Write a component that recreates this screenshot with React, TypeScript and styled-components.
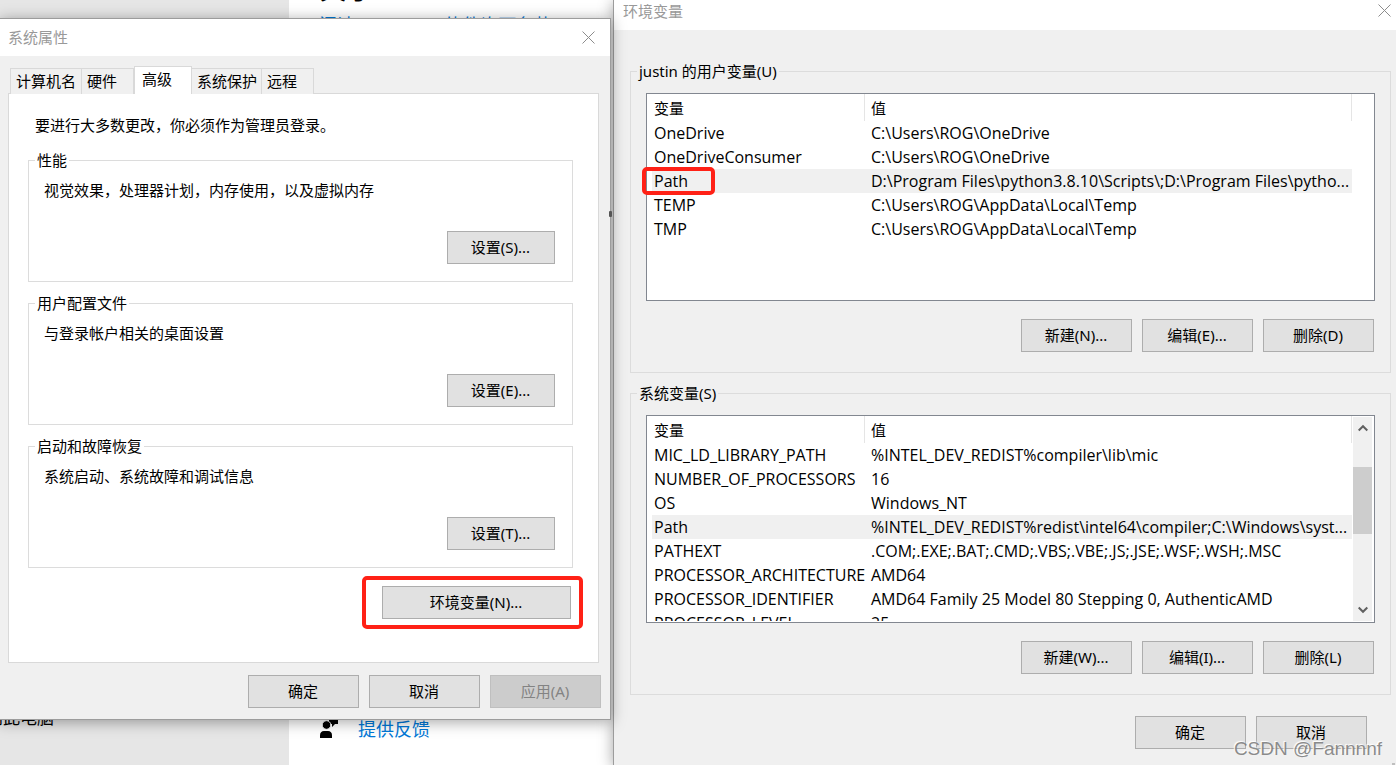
import React from 'react';
import styled, { createGlobalStyle } from 'styled-components';

const GlobalStyle = createGlobalStyle`
  * { box-sizing: border-box; }
  body {
    margin: 0;
    color: #000;
    font: 15px/20px "Noto Sans", "Noto Sans CJK SC", sans-serif;
  }
  button { font: inherit; color: inherit; }
`;

const Desktop = styled.div`
  position: relative;
  display: grid;
  grid-template-columns: 289px 1fr;
  min-height: 100vh;
  overflow: hidden;
`;

const SettingsNav = styled.nav`
  display: flex;
  flex-direction: column;
  justify-content: flex-end;
  padding-bottom: 35px;
  background: #e6e6e6;
`;

const NavItem = styled.a`
  margin-left: -14px;
  color: #000;
  font-size: 17px;
  line-height: 24px;
  text-decoration: none;
`;

const SettingsMain = styled.main`
  display: flex;
  flex-direction: column;
  justify-content: space-between;
  padding: 0 30px 23px;
  background: #fff;
`;

const SettingsHeading = styled.h1`
  margin: -32px 0 0;
  font-size: 28px;
  line-height: 40px;
`;

const SettingsLink = styled.a`
  display: block;
  margin-top: 4px;
  color: #0078d7;
  font-size: 18px;
  line-height: 26px;
  text-decoration: none;
`;

const Feedback = styled.div`
  display: flex;
  gap: 19px;
  align-items: center;
`;

const FeedbackLink = styled(SettingsLink)`
  margin: 0;
`;

const Window = styled.section`
  position: absolute;
  background: #f0f0f0;
  border: 1px solid #9c9c9c;
  box-shadow: 0 2px 14px rgba(0, 0, 0, 0.36);
`;

const PropertiesWindow = styled(Window)`
  top: 18px;
  left: -1px;
  width: 612px;
`;

const VariablesWindow = styled(Window)`
  top: 0;
  right: 0;
  bottom: 0;
  left: 613px;
  border-width: 0 0 0 1px;
`;

const TitleBar = styled.header<{ $height: number }>`
  display: flex;
  justify-content: space-between;
  align-items: center;
  height: ${(p) => p.$height}px;
  background: #fff;
`;

const Title = styled.h2`
  margin: 0;
  color: #999;
  font-size: 15px;
  font-weight: 400;
`;

const CloseButton = styled.button`
  display: flex;
  margin: 0;
  padding: 4px;
  border: 0;
  background: none;
`;

const PropertiesTitleBar = styled(TitleBar)`
  padding: 0 11px 1px 8px;
`;

const VariablesTitleBar = styled(TitleBar)`
  padding: 0 1px 9px 9px;
`;

const Tabs = styled.div`
  display: flex;
  align-items: flex-end;
  height: 38px;
  padding-left: 10px;
`;

const Tab = styled.button<{ $active?: boolean; $width: number }>`
  position: relative;
  width: ${(p) => p.$width}px;
  height: ${(p) => (p.$active ? 28 : 26)}px;
  padding: ${(p) => (p.$active ? '0 0 4px 7px' : '0 0 2px 5px')};
  border: 1px solid #d9d9d9;
  border-bottom-width: 0;
  border-left-width: ${(p) => (p.$active ? 1 : 0)}px;
  background: ${(p) => (p.$active ? '#fff' : '#f0f0f0')};
  text-align: left;
  white-space: nowrap;
  z-index: ${(p) => (p.$active ? 1 : 0)};
  &:first-child { border-left-width: 1px; }
`;

const TabPanel = styled.div`
  display: flex;
  flex-direction: column;
  height: 570px;
  margin: -1px 11px 0 8px;
  padding: 21px 25px 0 19px;
  border: 1px solid #d9d9d9;
  background: #fff;
`;

const AdminNote = styled.p`
  margin: 0 0 15px 7px;
`;

const Group = styled.fieldset`
  min-width: 0;
  margin: 0;
  padding: 0;
  border: 1px solid #dcdcdc;
`;

const GroupTitle = styled.legend`
  margin-left: 6px;
  padding: 0 2px;
`;

const SettingGroup = styled(Group)`
  margin-bottom: 11px;
`;

const SettingBody = styled.div`
  display: flex;
  flex-direction: column;
  justify-content: space-between;
  height: 111px;
  padding: 10px 17px 17px 15px;
`;

const SettingText = styled.p`
  margin: 0;
`;

const Button = styled.button<{ $width?: number }>`
  width: ${(p) => p.$width ?? 111}px;
  height: 33px;
  padding: 0 1px 2px 0;
  border: 1px solid #adadad;
  background: #e1e1e1;
  white-space: nowrap;
  &:disabled {
    border-color: #bfbfbf;
    background: #ccc;
    color: #838383;
  }
`;

const GroupButton = styled(Button)`
  align-self: flex-end;
`;

const Marked = styled.div`
  position: relative;
  align-self: flex-end;
  margin: 7px 2px 0 0;
`;

const Mark = styled.span`
  position: absolute;
  inset: -10px -12px -10px -20px;
  border: 4px solid #ff2116;
  border-radius: 5px;
  pointer-events: none;
`;

const NameMark = styled(Mark)`
  inset: -4px auto -4px -12px;
  width: 73px;
`;

const ButtonRow = styled.div`
  display: flex;
  justify-content: flex-end;
  gap: 10px;
`;

const PropertiesFooter = styled(ButtonRow)`
  padding: 12px 9px 11px;
`;

const VariablesBody = styled.div`
  display: flex;
  flex-direction: column;
  gap: 10px;
  padding: 31px 5px 0 16px;
`;

const VariableGroup = styled.div`
  display: flex;
  flex-direction: column;
  gap: 18px;
  padding: 12px 15px 20px;
`;

const GroupActions = styled(ButtonRow)`
  padding-right: 1px;
`;

const VariablesFooter = styled(ButtonRow)`
  padding: 11px 24px 0 0;
`;

const ListBox = styled.div`
  display: flex;
  height: 208px;
  padding: 0 2px 1px 5px;
  border: 1px solid #828790;
  background: #fff;
`;

const ListScroll = styled.div<{ $clip: boolean }>`
  flex: 1;
  min-width: 0;
  overflow: ${(p) => (p.$clip ? 'hidden' : 'visible')};
`;

const Table = styled.table`
  width: 100%;
  table-layout: fixed;
  border-collapse: separate;
  border-spacing: 0;
`;

const HeadCell = styled.th<{ $width?: number }>`
  width: ${(p) => (p.$width ? p.$width + 'px' : 'auto')};
  height: 27px;
  padding: 0 0 0 ${(p) => (p.$width ? 2 : 6)}px;
  border-right: 1px solid #e5e5e5;
  font-weight: 400;
  text-align: left;
`;

const Row = styled.tr<{ $selected?: boolean }>`
  background: ${(p) => (p.$selected ? '#f0f0f0' : '#fff')};
`;

const NameCell = styled.td`
  height: 24px;
  padding: 0 0 0 2px;
  font-family: "Open Sans", "Noto Sans CJK SC", sans-serif;
  font-size: 16px;
  white-space: nowrap;
`;

const ValueCell = styled(NameCell)`
  padding-left: 6px;
`;

const NameBox = styled.div`
  position: relative;
`;

const ScrollBar = styled.div<{ $shown: boolean }>`
  display: flex;
  flex-direction: column;
  justify-content: space-between;
  align-items: center;
  width: 19px;
  margin: 1px 0 0 1px;
  background: ${(p) => (p.$shown ? '#f0f0f0' : '#fff')};
`;

const ScrollButton = styled.button`
  display: flex;
  justify-content: center;
  align-items: center;
  width: 19px;
  height: 22px;
  padding: 0;
  border: 0;
  background: none;
`;

const ScrollTrack = styled.div`
  flex: 1;
  width: 100%;
  padding-top: 28px;
`;

const ScrollThumb = styled.div`
  height: 67px;
  background: #cdcdcd;
`;

const EdgeHandle = styled.span`
  position: absolute;
  top: 192px;
  right: -2px;
  width: 3px;
  height: 6px;
  border-radius: 1px;
  background: #555;
`;

const SizeGrip = styled.span`
  position: absolute;
  right: 1px;
  bottom: 0;
  width: 3px;
  height: 2px;
  background: #bfbfbf;
`;

const Watermark = styled.div`
  position: absolute;
  right: 14px;
  bottom: 4px;
  color: rgba(120, 120, 120, 0.85);
  font: 19px/24px "Liberation Sans", sans-serif;
  text-shadow: -1px -1px 1px #fff;
`;

const Close = () => (
  <CloseButton aria-label="关闭">
    <svg width="13" height="13" viewBox="0 0 13 13" stroke="#8c8c8c" fill="none">
      <path d="M.5.5l12 12M12.5.5l-12 12" />
    </svg>
  </CloseButton>
);

const Chevron = ({ down }: { down?: boolean }) => (
  <svg width="10" height="8" viewBox="0 0 10 8" stroke="#606060" strokeWidth="2" fill="none">
    <path d={down ? 'M.7 1.5L5 5.8l4.3-4.3' : 'M.7 6.5L5 2.2l4.3 4.3'} />
  </svg>
);

const FeedbackIcon = () => (
  <svg width="20" height="24" viewBox="0 0 20 24">
    <path d="M10 0h9v7h-3l-3 3V7h-3z" />
    <circle cx="7.5" cy="8" r="4.300" stroke="#fff" />
    <path d="M1 21v-2.500C1 15.500 2.500 14 5 14h4c2.500 0 4 1.500 4 4.500V21z" />
  </svg>
);

interface Variable {
  name: string;
  value: string;
  selected?: boolean;
  marked?: boolean;
}

const userVariables: Variable[] = [
  { name: 'OneDrive', value: 'C:\\Users\\ROG\\OneDrive' },
  { name: 'OneDriveConsumer', value: 'C:\\Users\\ROG\\OneDrive' },
  {
    name: 'Path',
    value: 'D:\\Program Files\\python3.8.10\\Scripts\\;D:\\Program Files\\pytho...',
    selected: true,
    marked: true,
  },
  { name: 'TEMP', value: 'C:\\Users\\ROG\\AppData\\Local\\Temp' },
  { name: 'TMP', value: 'C:\\Users\\ROG\\AppData\\Local\\Temp' },
];

const systemVariables: Variable[] = [
  { name: 'MIC_LD_LIBRARY_PATH', value: '%INTEL_DEV_REDIST%compiler\\lib\\mic' },
  { name: 'NUMBER_OF_PROCESSORS', value: '16' },
  { name: 'OS', value: 'Windows_NT' },
  {
    name: 'Path',
    value: '%INTEL_DEV_REDIST%redist\\intel64\\compiler;C:\\Windows\\syst...',
    selected: true,
  },
  { name: 'PATHEXT', value: '.COM;.EXE;.BAT;.CMD;.VBS;.VBE;.JS;.JSE;.WSF;.WSH;.MSC' },
  { name: 'PROCESSOR_ARCHITECTURE', value: 'AMD64' },
  { name: 'PROCESSOR_IDENTIFIER', value: 'AMD64 Family 25 Model 80 Stepping 0, AuthenticAMD' },
  { name: 'PROCESSOR_LEVEL', value: '25' },
];

const settings = [
  { title: '性能', text: '视觉效果，处理器计划，内存使用，以及虚拟内存', button: '设置(S)...' },
  { title: '用户配置文件', text: '与登录帐户相关的桌面设置', button: '设置(E)...' },
  { title: '启动和故障恢复', text: '系统启动、系统故障和调试信息', button: '设置(T)...' },
];

const tabs = [
  { label: '计算机名', width: 72 },
  { label: '硬件', width: 52 },
  { label: '高级', width: 58, active: true },
  { label: '系统保护', width: 70 },
  { label: '远程', width: 52 },
];

interface VariablesProps {
  title: string;
  rows: Variable[];
  actions: string[];
  scrollable?: boolean;
}

const Variables = ({ title, rows, actions, scrollable = false }: VariablesProps) => (
  <Group>
    <GroupTitle>{title}</GroupTitle>
    <VariableGroup>
      <ListBox>
        <ListScroll $clip={scrollable}>
          <Table>
            <thead>
              <tr>
                <HeadCell $width={213}>变量</HeadCell>
                <HeadCell>值</HeadCell>
              </tr>
            </thead>
            <tbody>
              {rows.map((row) => (
                <Row key={row.name} $selected={row.selected}>
                  <NameCell>
                    <NameBox>
                      {row.name}
                      {row.marked && <NameMark />}
                    </NameBox>
                  </NameCell>
                  <ValueCell>{row.value}</ValueCell>
                </Row>
              ))}
            </tbody>
          </Table>
        </ListScroll>
        <ScrollBar $shown={scrollable}>
          {scrollable && (
            <>
              <ScrollButton aria-label="向上滚动"><Chevron /></ScrollButton>
              <ScrollTrack><ScrollThumb /></ScrollTrack>
              <ScrollButton aria-label="向下滚动"><Chevron down /></ScrollButton>
            </>
          )}
        </ScrollBar>
      </ListBox>
      <GroupActions>
        {actions.map((label) => <Button key={label}>{label}</Button>)}
      </GroupActions>
    </VariableGroup>
  </Group>
);

export default function App() {
  return (
    <Desktop>
      <GlobalStyle />
      <SettingsNav>
        <NavItem href="#projecting">到此电脑</NavItem>
      </SettingsNav>
      <SettingsMain>
        <div>
          <SettingsHeading>关于</SettingsHeading>
          <SettingsLink href="#license">阅读 Microsoft 软件许可条款</SettingsLink>
        </div>
        <Feedback>
          <FeedbackIcon />
          <FeedbackLink href="#feedback">提供反馈</FeedbackLink>
        </Feedback>
      </SettingsMain>

      <VariablesWindow>
        <VariablesTitleBar $height={30}>
          <Title>环境变量</Title>
          <Close />
        </VariablesTitleBar>
        <VariablesBody>
          <Variables
            title="justin 的用户变量(U)"
            rows={userVariables}
            actions={['新建(N)...', '编辑(E)...', '删除(D)']}
          />
          <Variables
            title="系统变量(S)"
            rows={systemVariables}
            actions={['新建(W)...', '编辑(I)...', '删除(L)']}
            scrollable
          />
          <VariablesFooter>
            <Button>确定</Button>
            <Button>取消</Button>
          </VariablesFooter>
        </VariablesBody>
        <SizeGrip />
      </VariablesWindow>

      <PropertiesWindow>
        <PropertiesTitleBar $height={37}>
          <Title>系统属性</Title>
          <Close />
        </PropertiesTitleBar>
        <Tabs role="tablist">
          {tabs.map((tab) => (
            <Tab key={tab.label} role="tab" aria-selected={!!tab.active} $active={tab.active} $width={tab.width}>
              {tab.label}
            </Tab>
          ))}
        </Tabs>
        <TabPanel role="tabpanel">
          <AdminNote>要进行大多数更改，你必须作为管理员登录。</AdminNote>
          {settings.map((item) => (
            <SettingGroup key={item.title}>
              <GroupTitle>{item.title}</GroupTitle>
              <SettingBody>
                <SettingText>{item.text}</SettingText>
                <GroupButton $width={108}>{item.button}</GroupButton>
              </SettingBody>
            </SettingGroup>
          ))}
          <Marked>
            <Button $width={189}>环境变量(N)...</Button>
            <Mark />
          </Marked>
        </TabPanel>
        <PropertiesFooter>
          <Button>确定</Button>
          <Button>取消</Button>
          <Button disabled>应用(A)</Button>
        </PropertiesFooter>
        <EdgeHandle />
      </PropertiesWindow>
      <Watermark>CSDN @Fannnnf</Watermark>
    </Desktop>
  );
}
